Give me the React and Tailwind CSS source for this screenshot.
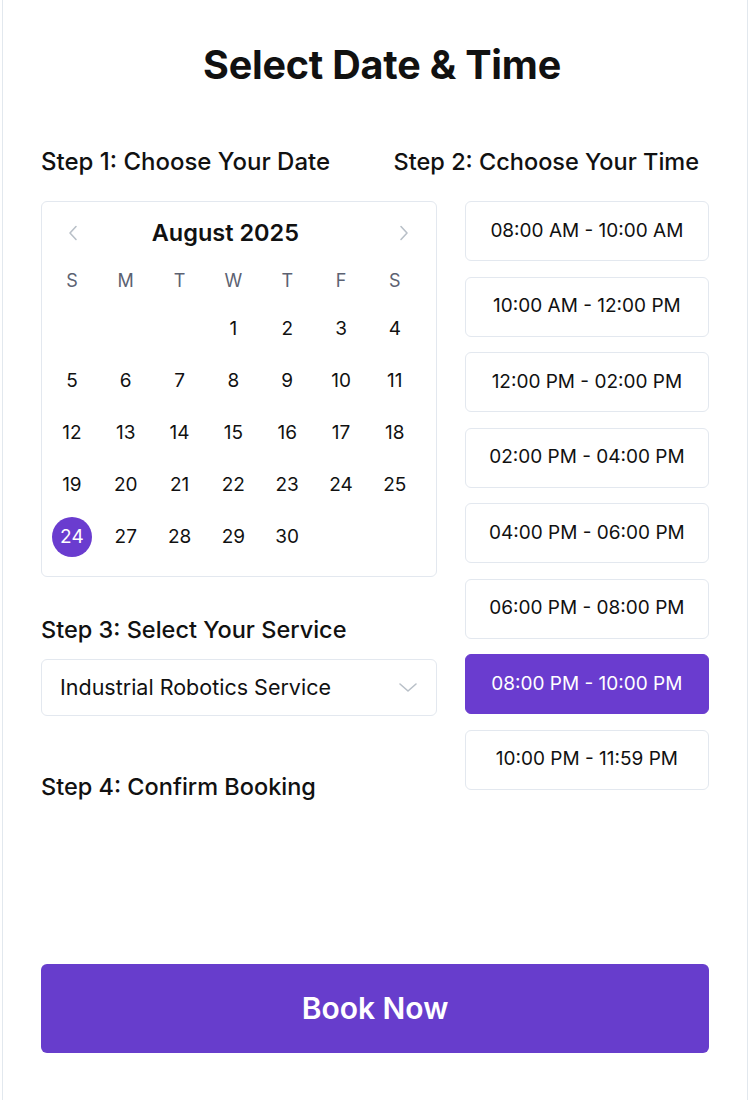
import React, { useState } from "react";

const WEEKDAYS = ["S", "M", "T", "W", "T", "F", "S"];
const DAYS = [
  null, null, null, 1, 2, 3, 4,
  5, 6, 7, 8, 9, 10, 11,
  12, 13, 14, 15, 16, 17, 18,
  19, 20, 21, 22, 23, 24, 25,
  24, 27, 28, 29, 30, null, null,
];
const SLOTS = [
  "08:00 AM - 10:00 AM",
  "10:00 AM - 12:00 PM",
  "12:00 PM - 02:00 PM",
  "02:00 PM - 04:00 PM",
  "04:00 PM - 06:00 PM",
  "06:00 PM - 08:00 PM",
  "08:00 PM - 10:00 PM",
  "10:00 PM - 11:59 PM",
];

const Chevron = ({ dir }) => (
  <svg width="16" height="18" viewBox="0 0 16 18" fill="none" stroke="#b9c0c8" strokeWidth="1.6" strokeLinecap="round" strokeLinejoin="round">
    {dir === "left" ? <path d="M11 2.5 5 9l6 6.5" /> : <path d="M5 2.5 11 9l-6 6.5" />}
  </svg>
);

export default function App() {
  const [slot, setSlot] = useState(6);
  const [day, setDay] = useState(28); // index of the highlighted cell

  return (
    <div className="mx-[2px] min-h-[1100px] border-x border-[#e2e8ee] bg-white font-['Inter',sans-serif] text-[#111]">
      <div className="px-[38px] pt-[41px]">
        <h1 className="pl-[14px] text-center text-[39.5px] font-bold leading-[48px] tracking-[-0.2px]">Select Date &amp; Time</h1>

        {/* step headings */}
        <div className="mt-[58px] flex items-center justify-between pr-[10px]">
          <h2 className="text-[24px] font-medium leading-[30px]">Step 1: Choose Your Date</h2>
          <h2 className="text-[23.5px] font-medium leading-[30px]">Step 2: Cchoose Your Time</h2>
        </div>

        <div className="mt-[24px] flex gap-[28px]">
          {/* left column */}
          <div className="w-[397px]">
            <div className="rounded-md border border-[#e3e8ef] pl-[3px] pr-[14px] pt-[14px] pb-[19px]">
              <div className="flex items-center justify-between pl-[20px] pr-[10px]">
                <Chevron dir="left" />
                <span className="mr-[26px] text-[23.5px] font-semibold leading-[34px]">August 2025</span>
                <Chevron dir="right" />
              </div>
              <div className="mt-[15px] grid grid-cols-7">
                {WEEKDAYS.map((w, i) => (
                  <div key={i} className="flex h-[30px] items-center justify-center text-[18px] text-[#5c6272]">{w}</div>
                ))}
              </div>
              <div className="mt-[14px] grid grid-cols-7 gap-y-[12px]">
                {DAYS.map((d, i) => (
                  <div key={i} className="flex h-[40px] items-center justify-center">
                    {d !== null && (
                      <button
                        type="button"
                        onClick={() => setDay(i)}
                        className={`flex h-[40px] w-[40px] items-center justify-center rounded-full text-[19px] ${
                          day === i ? "bg-[#6a3ccf] text-white" : "text-[#111]"
                        }`}
                      >
                        {d}
                      </button>
                    )}
                  </div>
                ))}
              </div>
            </div>

            <h2 className="mt-[38px] text-[23.5px] font-medium leading-[30px]">Step 3: Select Your Service</h2>
            <div className="mt-[14px] flex h-[57px] items-center justify-between rounded-md border border-[#e3e8ef] pl-[18px] pr-[18px]">
              <span className="text-[21.5px] text-[#111]">Industrial Robotics Service</span>
              <svg width="20" height="12" viewBox="0 0 20 12" fill="none" stroke="#b9c0c8" strokeWidth="1.6" strokeLinecap="round" strokeLinejoin="round">
                <path d="M2 2l8 7 8-7" />
              </svg>
            </div>

            <h2 className="mt-[56px] text-[23.5px] font-medium leading-[30px]">Step 4: Confirm Booking</h2>
          </div>

          {/* right column */}
          <div className="flex w-[245px] flex-col gap-[15.5px]">
            {SLOTS.map((s, i) => (
              <button
                key={s}
                type="button"
                onClick={() => setSlot(i)}
                className={`flex h-[60px] items-center justify-center rounded-md border text-[19px] ${
                  slot === i ? "border-[#6a3ccf] bg-[#6a3ccf] text-white" : "border-[#e3e8ef] bg-white text-[#111]"
                }`}
              >
                {s}
              </button>
            ))}
          </div>
        </div>

        <button
          type="button"
          className="mt-[162px] flex h-[89px] w-full items-center justify-center rounded-md bg-[#673dcc] text-[30px] font-semibold text-white"
        >
          Book Now
        </button>
      </div>
    </div>
  );
}
